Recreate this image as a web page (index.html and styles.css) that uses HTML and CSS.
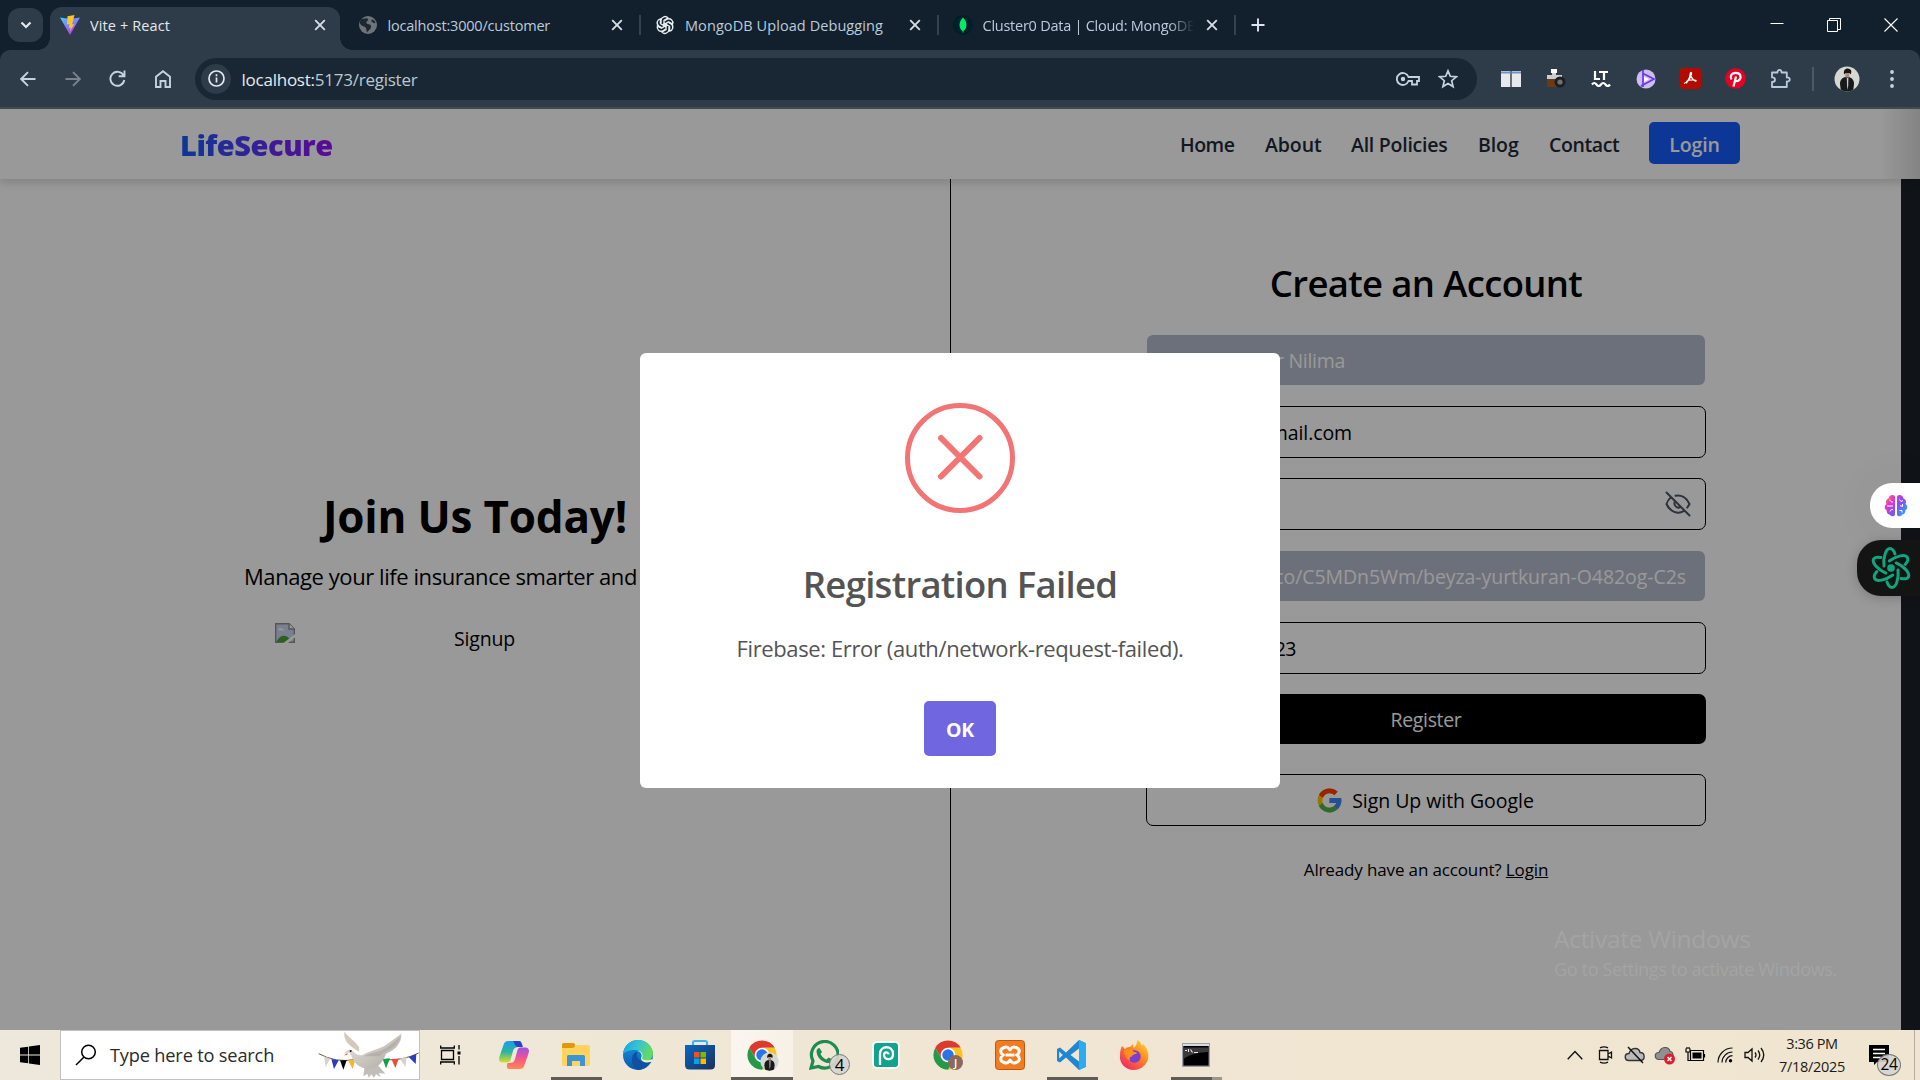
FILE: index.html
```
<!DOCTYPE html>
<html lang="en">
<head>
<meta charset="utf-8">
<title>Vite + React</title>
<link rel="stylesheet" href="styles.css">
</head>
<body>
<svg width="0" height="0" class="defs">
  <defs>
    <linearGradient id="gVite" x1="0" y1="0" x2=".6" y2="1"><stop offset="0" stop-color="#41d1ff"/><stop offset="1" stop-color="#bd34fe"/></linearGradient>
    <linearGradient id="gBrain" x1="0" y1="0" x2="1" y2=".8"><stop offset="0" stop-color="#ff9a3c"/><stop offset=".3" stop-color="#e835c8"/><stop offset=".6" stop-color="#8a4df0"/><stop offset="1" stop-color="#28a8ff"/></linearGradient>
    <linearGradient id="gStore" x1="0" y1="0" x2="1" y2="1"><stop offset="0" stop-color="#0669c4"/><stop offset="1" stop-color="#1d2f5c"/></linearGradient>
    <linearGradient id="gEdge" x1="0" y1="0" x2="1" y2=".3"><stop offset="0" stop-color="#1b9de0"/><stop offset=".5" stop-color="#33c3d8"/><stop offset="1" stop-color="#64dc5c"/></linearGradient>
    <linearGradient id="gEdge2" x1="0" y1="0" x2="0" y2="1"><stop offset="0" stop-color="#1699e0"/><stop offset="1" stop-color="#0a57b0"/></linearGradient>
    <linearGradient id="gCopA" x1="0" y1="0" x2="0" y2="1"><stop offset="0" stop-color="#1d9bf0"/><stop offset=".5" stop-color="#2bb5a0"/><stop offset="1" stop-color="#d9dc2c"/></linearGradient>
    <linearGradient id="gCopB" x1="0" y1="0" x2="0" y2="1"><stop offset="0" stop-color="#a04fe8"/><stop offset=".5" stop-color="#f0568c"/><stop offset="1" stop-color="#ff8a50"/></linearGradient>
    <linearGradient id="gFox" x1="1" y1="0" x2=".2" y2="1"><stop offset="0" stop-color="#ffe33c"/><stop offset=".45" stop-color="#ff8a1e"/><stop offset="1" stop-color="#f0246a"/></linearGradient>
    <linearGradient id="gWing" x1="0" y1="0" x2="1" y2="1"><stop offset="0" stop-color="#eceae6"/><stop offset="1" stop-color="#aca69f"/></linearGradient>
    <symbol id="chrome" viewBox="0 0 48 48"><circle cx="24" cy="24" r="12" fill="#fff"/><path fill="#dc3a2c" d="M24 13H43A22 22 0 0 0 5 13L14.5 29.5A11 11 0 0 1 24 13z"/><path fill="#fcc31e" d="M43 13H24A11 11 0 0 1 33.5 29.5L24 46A22 22 0 0 0 43 13z"/><path fill="#249a49" d="M5 13A22 22 0 0 0 24 46L33.5 29.5A11 11 0 0 1 14.5 29.5z"/><circle cx="24" cy="24" r="8.6" fill="#2a74e8"/></symbol>
    <symbol id="x" viewBox="0 0 12 12"><path d="M1.2 1.2l9.6 9.6M10.8 1.2L1.2 10.8" fill="none" stroke="currentColor" stroke-width="1.9"/></symbol>
    <symbol id="person" viewBox="0 0 26 26"><clipPath id="cp"><circle cx="13" cy="13" r="12.5"/></clipPath><g clip-path="url(#cp)"><path fill="#d5d8d3" d="M0 0h26v26H0z"/><path fill="#17191b" d="M7 26L6 18c0-4 2-6 5-7h4c3 1 5 3 5 7l-1 8z"/><path fill="#a88f7d" d="M11.300 6h4v5.500h-4z"/><path fill="#17130f" d="M10 8.500C9 2 14 2 15.500 3c2.500 1 2 3.500 1 5.500L15.500 7h-4z"/><path fill="#c9c9c6" d="M12.800 12h1.600l-.2 8-1 4z"/></g></symbol>
  </defs>
</svg>

<header class="tabs">
  <button class="tab-search"><svg width="12" height="8" viewBox="0 0 12 8"><path d="M1.500 1.500L6 6l4.500-4.500" fill="none" stroke="#e3e8ee" stroke-width="2.200"/></svg></button>
  <div class="tab active">
    <svg width="20" height="20" viewBox="0 0 20 20"><path d="M0 2.500L10 20 20 2.500 10 4z" fill="url(#gVite)"/><path d="M14.500 0L7.500 1.300 7 9.500l2.500-.5-.8 4 2-.5-1 4 4.800-7.500-2.500.5z" fill="#ffc524"/></svg>
    <span class="tab-label ls-a">Vite + React</span>
    <svg class="tab-close" width="12" height="12"><use href="#x"/></svg>
  </div>
  <div class="tab">
    <svg width="20" height="20" viewBox="0 0 20 20"><circle cx="10" cy="10" r="9" fill="#6f7479"/><path d="M4 3.500c2 1 5-1.500 6 .5s-2.500 2-1.500 4 4 .5 4.500 3-2 4-4 6.500c-1-2 0-3.500-1.500-5S3 11 2 8.500 3 5 4 3.500zM13.500 4.500c2 0 3.500 1.500 4 3.500-1.500.5-3-.5-4-1.500z" fill="#1b2933"/></svg>
    <span class="tab-label ls-b">localhost:3000/customer</span>
    <svg class="tab-close" width="12" height="12"><use href="#x"/></svg>
  </div>
  <div class="tab">
    <svg width="20" height="20" viewBox="0 0 20 20"><g fill="none" stroke="#e9edf0" stroke-width="1.400"><path id="pt" d="M6 8V5.200A4 4 0 0 1 13 3L9 5.300V12"/><use href="#pt" transform="rotate(60 10 10)"/><use href="#pt" transform="rotate(120 10 10)"/><use href="#pt" transform="rotate(180 10 10)"/><use href="#pt" transform="rotate(240 10 10)"/><use href="#pt" transform="rotate(300 10 10)"/></g></svg>
    <span class="tab-label ls-c">MongoDB Upload Debugging</span>
    <svg class="tab-close" width="12" height="12"><use href="#x"/></svg>
  </div>
  <div class="tab">
    <svg width="20" height="20" viewBox="0 0 20 20"><circle cx="10" cy="10" r="10" fill="#001e2b"/><path d="M10 2.500c5 5 4 11 .5 13.500v1.500h-1V16C6 13.500 5 7.500 10 2.500z" fill="#00ed64"/></svg>
    <span class="tab-label ls-d fade">Cluster0 Data | Cloud: MongoDB</span>
    <svg class="tab-close" width="12" height="12"><use href="#x"/></svg>
  </div>
  <button class="new-tab"><svg width="14" height="14" viewBox="0 0 14 14"><path d="M7 .5v13M.5 7h13" stroke="#dfe5ec" stroke-width="1.900"/></svg></button>
  <div class="win">
    <svg width="14" height="14" viewBox="0 0 14 14"><path d="M.5 5.500h13" stroke="#fff"/></svg>
    <svg width="14" height="14" viewBox="0 0 14 14"><path d="M.5 2.500h10v11H.5zM2.500 2.500V.5h11v11h-3" fill="none" stroke="#fff"/></svg>
    <svg width="14" height="14" viewBox="0 0 14 14"><path d="M.5.5l13 13M13.500.5l-13 13" stroke="#fff" stroke-width="1.100"/></svg>
  </div>
</header>

<div class="toolbar">
  <div class="nav-icons">
    <svg width="16" height="16" viewBox="0 0 16 16"><path d="M15.500 8H1.500M8 1.200L1.200 8 8 14.800" fill="none" stroke="#c5d3e1" stroke-width="1.900"/></svg>
    <svg width="16" height="16" viewBox="0 0 16 16"><path d="M.5 8h14M8 1.200L14.800 8 8 14.800" fill="none" stroke="#77848f" stroke-width="1.900"/></svg>
    <svg width="17" height="17" viewBox="0 0 17 17"><path d="M14.600 5.500A7 7 0 1 0 15.300 10M15.500.5v5.800H9.700" fill="none" stroke="#c5d3e1" stroke-width="1.900"/></svg>
    <svg width="16" height="18" viewBox="0 0 16 18"><path d="M1 17V6.800L8 1.200l7 5.600V17h-4.500v-6h-5v6z" fill="none" stroke="#c5d3e1" stroke-width="1.900"/></svg>
  </div>
  <div class="omnibox">
    <span class="site-info"><svg width="17" height="17" viewBox="0 0 17 17"><circle cx="8.500" cy="8.500" r="7.500" fill="none" stroke="#e3e8ee" stroke-width="1.700"/><path d="M8.500 7.500v5M8.500 4.300v1.900" stroke="#e3e8ee" stroke-width="1.700"/></svg></span>
    <span class="url"><b>localhost:</b>5173/register</span>
    <span class="omni-icon"><svg width="24" height="14" viewBox="0 0 24 14"><path d="M12.500 5A6 6 0 1 0 12.500 9H16v3.500h5V9h2V5z" fill="none" stroke="#c5d3e1" stroke-width="1.800"/><circle cx="7" cy="7" r="2.200" fill="#c5d3e1"/></svg></span>
    <span class="omni-icon"><svg width="20" height="20" viewBox="0 0 20 20"><path d="M10 1.800l2.300 5.500 6 .5-4.600 3.900 1.400 5.900L10 14.500l-5.100 3.100 1.400-5.900L1.700 7.800l6-.5z" fill="none" stroke="#c5d3e1" stroke-width="1.700"/></svg></span>
  </div>
  <div class="exts">
    <svg width="20" height="18" viewBox="0 0 20 18"><path fill="#e9e9ec" d="M0 1h9.300v16H0zM10.700 1H20v16h-9.300z"/><path fill="#6b94c7" d="M0 1.500h9.300v2H0zM10.700 1.500H20v2h-9.300z"/></svg>
    <svg width="20" height="20" viewBox="0 0 20 20"><path fill="#fff" d="M5 0h6v4H5z"/><path fill="#c9ccd2" d="M1 6h15v5H1zM6 4h4v3H6z"/><path fill="#6b3a14" d="M1 10h11v8H1z"/><circle cx="14" cy="13" r="5.500" fill="#1c1e22"/><circle cx="14" cy="13" r="2.600" fill="#6d7178"/></svg>
    <svg width="20" height="17" viewBox="0 0 20 17"><path d="M4 1v8h5M8 2h9M13 2v8M1 14.500q2.200-3 4.500 0t4.500 0 4.500 0 4.500 0" fill="none" stroke="#fff" stroke-width="2.200"/></svg>
    <svg width="20" height="20" viewBox="0 0 20 20"><circle cx="10" cy="10" r="9.500" fill="#cdbdf5"/><path d="M7 1v17M7 4.500l11 5.500-13 7" fill="none" stroke="#6d35e8" stroke-width="1.700"/><path d="M8 7.500l5 2.700-5 2.800z" fill="#fff"/></svg>
    <svg width="21" height="21" viewBox="0 0 21 21"><rect width="21" height="21" rx="3" fill="#b30b00"/><path d="M4 15.500c3-1 6-5 6.300-10 .2-1.600 1.600-1.200 1.200.5-.8 3-2.600 6-5.300 9.300M6 13.500c3-1.500 7-2 10.500-.8M10.800 8c1 2.500 3 4.500 5.500 5.500" fill="none" stroke="#fff" stroke-width="1.300"/></svg>
    <svg width="21" height="21" viewBox="0 0 21 21"><circle cx="10.500" cy="10.500" r="10.300" fill="#e60023"/><path d="M8.500 18.500l2.500-10M6.500 11.500C4.500 8.500 6.500 4.800 10.800 4.800c5 0 5.700 4.200 3.700 7-1.500 1.800-3.800 1.600-4.500 0" fill="none" stroke="#fff" stroke-width="2.200"/></svg>
    <svg width="21" height="21" viewBox="0 0 21 21"><path d="M2 4.500h5.500c-.5-3.500 4.500-3.500 4 0h5.300v5c4-.5 4 4.500 0 4v5.500H2v-5c4 0 4-4.600 0-4.600z" fill="none" stroke="#b9cadb" stroke-width="1.800" stroke-linejoin="round"/></svg>
  </div>
  <span class="tool-sep"></span>
  <svg class="avatar" width="26" height="26"><use href="#person"/></svg>
  <svg width="4" height="20" viewBox="0 0 4 20"><path d="M2 3h0M2 10h0M2 17h0" stroke="#c5d3e1" stroke-width="3.800" stroke-linecap="round"/></svg>
</div>

<main class="page">
  <nav class="site-nav">
    <span class="logo">LifeSecure</span>
    <div class="links"><a class="w1">Home</a><a class="w2">About</a><a class="w3">All Policies</a><a class="w4">Blog</a><a class="w5">Contact</a></div>
    <a class="login">Login</a>
  </nav>
  <div class="split">
    <section class="pitch">
      <h1>Join Us Today!</h1>
      <p>Manage your life insurance smarter and faster.</p>
      <div class="broken">
        <svg width="20" height="20" viewBox="0 0 20 20"><path d="M.7.7H14l5.300 5.300v13.300H.7z" fill="#c8d6f4" stroke="#8e8e8e" stroke-width="1.400"/><path d="M1.500 19c2-6 9-9 13-3l-4 3z" fill="#4fa12c"/><path d="M3 7c1-2.500 3-2.500 4-1 2-.5 2.500 1 2 1.500z" fill="#fff"/><path d="M14 .7V6h5.300" fill="#fff" stroke="#8e8e8e" stroke-width="1.400"/><path d="M8.500 20L20 11v3.500L13 20z" fill="#fff"/></svg>
        <span>Signup</span>
      </div>
    </section>
    <section class="signup">
      <h2>Create an Account</h2>
      <div class="fields">
        <div class="field filled"><span class="v1">Akter Nilima</span></div>
        <div class="field"><span class="v2">@gmail.com</span></div>
        <div class="field"><svg class="eye" width="26" height="26" viewBox="0 0 26 26"><g fill="none" stroke="#4a5565" stroke-width="2" stroke-linecap="round"><path d="M1.500 1.500l23 23M10.500 4.800C16 3.500 21.500 6.500 24.500 13c-.6 1.400-1.400 2.500-2.300 3.600M6 6.200C4 7.600 2.500 10 1.500 13c3.500 8 11.500 10.500 17 7.200M10 10.300c-2 3.800 2 7.800 5.600 5.600"/></g></svg></div>
        <div class="field filled"><span class="v4">co/C5MDn5Wm/beyza-yurtkuran-O482og-C2s</span></div>
        <div class="field"><span class="v5">123</span></div>
        <button class="register">Register</button>
      </div>
      <button class="google">
        <svg width="25" height="25" viewBox="3 3 42 42"><path fill="#FFC107" d="M43.600 20H24v8h11.300C33.700 32.700 29.200 36 24 36c-6.600 0-12-5.400-12-12s5.400-12 12-12c3 0 5.800 1.200 8 3l5.600-5.700C34 6 29.300 4 24 4 13 4 4 13 4 24s9 20 20 20 20-9 20-20c0-1.300-.1-2.700-.4-4z"/><path fill="#FF3D00" d="M6.300 14.700l6.600 4.800C14.700 15 19 12 24 12c3 0 5.800 1.200 8 3l5.600-5.700C34 6 29.300 4 24 4 16.300 4 9.700 8.300 6.300 14.700z"/><path fill="#4CAF50" d="M24 44c5.200 0 9.900-2 13.400-5.200l-6.200-5.200C29.200 35 26.700 36 24 36c-5.200 0-9.600-3.300-11.300-8l-6.500 5C9.500 39.600 16.200 44 24 44z"/><path fill="#4285F4" d="M43.600 20H24v8h11.300c-.8 2.200-2.200 4.200-4.100 5.600l6.200 5.200C37 39.200 44 34 44 24c0-1.300-.1-2.700-.4-4z"/></svg>
        <span>Sign Up with Google</span>
      </button>
      <p class="have">Already have an account? <u>Login</u></p>
    </section>
  </div>
  <div class="backdrop">
    <div class="modal">
      <svg width="110" height="110" viewBox="0 0 110 110"><circle cx="55" cy="55" r="52.500" fill="none" stroke="#f27474" stroke-width="5"/><path d="M36 35l38.500 38.500M74.500 35L36 73.500" stroke="#f27474" stroke-width="6" stroke-linecap="round"/></svg>
      <h2>Registration Failed</h2>
      <p>Firebase: Error (auth/network-request-failed).</p>
      <button>OK</button>
    </div>
  </div>
  <div class="watermark"><div class="wm1">Activate Windows</div><div class="wm2">Go to Settings to activate Windows.</div></div>
  <div class="side">
    <div class="brain"><svg width="24" height="24" viewBox="0 0 24 24"><path d="M11 2.500C9-.2 5 1 4.500 4.500 1.500 5.500 1.500 9 2.500 10-.2 12 .5 15.500 2.500 16c0 3 1.500 4.500 3.500 4.700 1 2 4 2.300 5 .3zM13 2.500C15-.2 19 1 19.500 4.500c3 1 3 4.500 2 5.500 2.700 2 2 5.500 0 6 0 3-1.500 4.500-3.500 4.700-1 2-4 2.300-5 .3z" fill="url(#gBrain)"/><path d="M3 12h6M6 5.500c0 2 1.500 2.500 3 2.500M6 17.500c0-1.500 1.500-2 3-2M15.500 5.500L17 7.500l2-1M16 11.500l2.500 1v-2.500M15.500 16.500h2.500v2" fill="none" stroke="#fff" stroke-width="1"/></svg></div>
    <div class="atom"><svg width="40" height="44" viewBox="0 0 40 44"><g fill="none" stroke="#0fa67f" stroke-width="3" stroke-linecap="round"><path id="orb" d="M13 20C12 11 15 2.500 19 2.500c2.500 0 4 2.500 5 5.500"/><use href="#orb" transform="rotate(60 20 22)"/><use href="#orb" transform="rotate(120 20 22)"/><use href="#orb" transform="rotate(180 20 22)"/><use href="#orb" transform="rotate(240 20 22)"/><use href="#orb" transform="rotate(300 20 22)"/></g><circle cx="20" cy="22" r="3.800" fill="#0fa67f"/></svg></div>
  </div>
</main>

<footer class="taskbar">
  <div class="start"><svg width="20" height="20" viewBox="0 0 20 20"><path d="M0 2.800L8.200 1.700v7.900H0zM9 1.600L20 0v9.600H9zM0 10.400h8.200v7.900L0 17.200zM9 10.400h11V20L9 18.400z"/></svg></div>
  <div class="search">
    <svg width="22" height="22" viewBox="0 0 22 22"><circle cx="13.500" cy="8" r="6.800" fill="none" stroke="#000" stroke-width="1.500"/><path d="M8.800 13.200L1 21" stroke="#000" stroke-width="1.500"/></svg>
    <span>Type here to search</span>
    <svg class="dove" width="102.700" height="48" viewBox="20 8 308 144">
      <path d="M28 76Q80 104 135 94M225 94Q280 98 328 74" fill="none" stroke="#6a5a4a" stroke-width="3"/>
      <path fill="#d8d2cc" d="M44 84l18 8-13 24z"/><path fill="#2a3cc0" d="M66 92l22 4-14 26z"/><path fill="#000" d="M92 96h20l-10 28z"/><path fill="#f7b52c" d="M116 96l22-2-8 28z"/><path fill="#12a04a" d="M220 92l22-2-12 30z"/><path fill="#f04a3c" d="M246 92l22-1-10 28z"/><path fill="#d8d2cc" d="M272 91l20-5-4 30z"/><path fill="#2a3cc0" d="M298 86l23-9-2 30z"/>
      <path d="M150 70C128 58 100 40 105 10c10 14 32 28 44 46z" fill="#d3cab9"/>
      <path d="M165 118l-3 26 12-8 4 12 8-10 8 10 6-10 14 8-6-12 20 2-26-30z" fill="#c2bdb8"/>
      <path d="M104 76c8-16 24-14 30-4 10 10 22 12 32 4 18-8 40-14 58-22l52-38c2 26-16 48-46 60-8 26-30 50-62 44-24-4-36-20-46-46l-8-1z" fill="url(#gWing)"/>
      <path d="M162 84c24-14 46-10 70-26l42-34c-6 32-42 42-64 60z" fill="#aaa39c" opacity=".55"/>
      <path d="M114 74l-10 7 10-1z" fill="#f0602c"/><circle cx="124" cy="68" r="3.200" fill="#111"/>
    </svg>
  </div>
  <div class="app view"><svg width="22" height="20" viewBox="0 0 22 20"><path d="M1.500 5.500h12v9h-12zM.7.500v2.500h13.600V.5M.7 19.500V17h13.600v2.500M19 0v4.500M19 11v8.500" fill="none" stroke="#000" stroke-width="1.300"/><path d="M17.500 6.500h3v3h-3z"/></svg></div>
  <div class="app"><svg width="30" height="28" viewBox="0 0 30 28"><path d="M4.500 4C5.500 1 6.500 0 9.500 0h10c3 0 3 3 2 6h-2c-3 0-4.500 1-5.500 4l-2.500 9c-.6 2-2 2.500-4 2.500H4c-4 0-4.500-3-3.500-6z" fill="url(#gCopA)"/><path d="M14 0h6c2.500 0 3 3 4 6h-5c-2.500 0-3-3-5-6z" fill="#2347c8"/><path d="M25.500 24c-1 3-2 4-5 4h-10c-3 0-3-3-2-6h2c3 0 4.500-1 5.500-4l2.500-9c.6-2 2-2.500 4-2.500H26c4 0 4.500 3 3.500 6z" fill="url(#gCopB)"/></svg></div>
  <div class="app"><svg width="28" height="24" viewBox="0 0 28 24"><path d="M0 2C0 1 .5 0 2 0h9c1.500 0 2 1 2.500 2H26c1.500 0 2 .8 2 2v17c0 1-.5 2-2 2H2c-1.500 0-2-1-2-2z" fill="#ffd35c"/><path d="M0 5V2C0 1 .5 0 2 0h9c1.500 0 2 1 2 2.500S12 5 10 5z" fill="#dd9a0c"/><path d="M5 23v-9c0-1.500.5-2 2-2h14c1.500 0 2 .5 2 2v9h-5v-5h-8v5z" fill="#3a94d8"/></svg><i class="line"></i></div>
  <div class="app"><svg width="30" height="30" viewBox="0 0 30 30"><circle cx="15" cy="15" r="15" fill="url(#gEdge2)"/><path d="M0 14C1 5 8 0 15 0c9 0 15 7 15 13.500 0 5-4 7.500-8 7.500-3 0-4.500-1.500-4-3 2-3-.5-7.500-5.500-8C6.500 9.500 1.500 12 0 14z" fill="url(#gEdge)"/><path d="M9 20c0-5 2-8 6-8.500-2 2-1.500 6 1 8 3.500 3 8 3 11.500 2C24 28 18 30.500 14 29.800 11 28 9 24 9 20z" fill="#1050a0"/><path d="M18 18c2-2.500 0-7-4.500-7 6-1 7 5 5.500 7 0 2.500 7 3 9.500 1l1.500 2c-4 2.500-12 2-12-3z" fill="#f0e9db"/></svg></div>
  <div class="app"><svg width="30" height="30" viewBox="0 0 30 30"><path d="M8 5V2.500C8 1 9 1 10 1h10c1 0 2 0 2 1.500V5" fill="none" stroke="#35b5f0" stroke-width="2"/><path d="M0 5h30v20c0 3-1.500 4.500-4.500 4.500h-21C1.500 29.500 0 28 0 25z" fill="url(#gStore)"/><path fill="#f25022" d="M9 12h5.500v5.500H9z"/><path fill="#7fba00" d="M15.500 12H21v5.500h-5.500z"/><path fill="#00a4ef" d="M9 18.500h5.500V24H9z"/><path fill="#ffb900" d="M15.500 18.500H21V24h-5.500z"/></svg></div>
  <div class="app current"><svg width="33" height="33" viewBox="0 0 33 33"><use href="#chrome" width="32" height="32"/><use href="#person" x="14" y="13" width="19" height="19"/></svg><i class="line wide"></i></div>
  <div class="app"><svg width="30" height="30" viewBox="0 0 30 30"><path d="M2 28l2-7A13.300 13.300 0 1 1 9.500 26.500z" fill="none" stroke="#1d8c50" stroke-width="3.200"/><path d="M10.500 8l2.500 4-1.500 2c1.500 3 3.500 4.500 6 5.500l2-2 4 2c-.5 3-3 4-5.500 3.500-6-1.500-10-6-10.500-11.500 0-2 1.500-3.500 3-3.500z" fill="#1d8c50"/></svg><b class="badge">4</b></div>
  <div class="app"><svg width="28" height="28" viewBox="0 0 28 28"><rect x="1" y="1" width="26" height="26" rx="4" fill="#12a38c" stroke="#f8f8f6" stroke-width="2"/><path d="M8 24V13c0-9 13-9 13 0 0 7-9 6.500-9 1 0-3.500 4.500-3.500 4.500-.5" fill="none" stroke="#fff" stroke-width="2.300"/></svg></div>
  <div class="app"><svg width="32" height="32" viewBox="0 0 32 32"><use href="#chrome" width="32" height="32"/><circle cx="23.500" cy="23.500" r="7.500" fill="#8a6a5d"/></svg><b class="letter">J</b></div>
  <div class="app"><svg width="30" height="30" viewBox="0 0 30 30"><rect x=".5" y=".5" width="29" height="29" rx="3" fill="#f47c20" stroke="#b85a14"/><path d="M9 7.500c5-2 5 2.500 6 2.500s1-4.500 6-2.500 3.500 5.500 1 7.500c2.500 2 4 5.500-1 7.500s-5-2.500-6-2.500-1 4.500-6 2.500-3.500-5.500-1-7.500c-2.500-2-4-5.500 1-7.500z" fill="none" stroke="#fff" stroke-width="3"/><path d="M10.500 15h9" stroke="#fff" stroke-width="3"/></svg></div>
  <div class="app"><svg width="30" height="30" viewBox="0 0 30 30"><path d="M22 0l7 3.200v23.600L22 30 9 17.500 3 22.500 0 21V9l3-1.500 6 5z" fill="#1f86d2"/><path d="M22 8.500L13.500 15l8.500 6.500z" fill="#f0e6d2"/><path d="M2.200 11.500L5.800 15l-3.600 3.500z" fill="#f0e6d2"/><path d="M22 0l7 3.200v23.600L22 30z" fill="#2eaaf2"/></svg><i class="line"></i></div>
  <div class="app"><svg width="30" height="30" viewBox="0 0 30 30"><path d="M3 6l3 3c2-2 4-2 5-2l3-3 .5 4C17 7 18 3 18.500 0c2.500 1.500 4 4 4.500 6l1-2c5 4 6 11 5 15-2 7-8 11-14 11C6 30 0 23 1 15c0-4 1-7 2-9z" fill="url(#gFox)"/><circle cx="15.500" cy="16.500" r="6.200" fill="#7a3fd0"/><path d="M5 10c5-2 8 0 10 2 2 0 3 .5 3 1.500-2 1-5 1-5 3-2 0-3 2-2 4-5-2-6-7-6-10.500z" fill="#ff9020"/></svg></div>
  <div class="app"><svg width="28" height="24" viewBox="0 0 28 24"><rect x=".7" y=".7" width="26.600" height="22.600" fill="#000" stroke="#9aa0a8" stroke-width="1.400"/><path d="M1 1h26v2H1z" fill="#d9dde3"/><path d="M1.500 4.500h25V9C18 9.500 8 11 1.500 16z" fill="#3a3a3a"/><path d="M3 7.500h2M6.500 6v3M8.500 6.500l2 3M12 9.500h4" stroke="#e8e8e8" stroke-width="1.100"/></svg><i class="line multi"></i></div>

  <div class="tray">
    <span><svg width="16" height="10" viewBox="0 0 16 10"><path d="M.7 9.300L8 1.500l7.300 7.800" fill="none" stroke="#111" stroke-width="1.400"/></svg></span>
    <span><svg width="16" height="18" viewBox="0 0 16 18"><path d="M2.500 4.500h8.500v9H2.500zM11 8l3.500-2v6L11 10M3 1.800q4-2 8 0M3 16.200q4 2 8 0" fill="none" stroke="#111" stroke-width="1.300"/></svg></span>
    <span><svg width="22" height="18" viewBox="0 0 22 18"><path d="M5 14.500c-5 0-5-7 0-7C7 1 15 1 16 6.500c5.500 0 5.500 8 0 8z" fill="#b9bab9" stroke="#333" stroke-width="1.400"/><path d="M4 1l15 16" stroke="#111" stroke-width="1.400"/></svg></span>
    <span><svg width="22" height="20" viewBox="0 0 22 20"><path d="M5 14.500c-5 0-5-7 0-7C7 1 15 1 16 6.500c4 0 4 8 0 8z" fill="#8f9090" stroke="#555" stroke-width="1.200"/><circle cx="15.500" cy="14" r="5.500" fill="#dc1f2e"/><path d="M13.500 12l4 4M17.500 12l-4 4" stroke="#fff" stroke-width="1.500"/></svg></span>
    <span><svg width="21" height="16" viewBox="0 0 21 16"><path d="M5.500 3.500h13v10h-13zM19.500 7v3.500M1 1.500v3.500h4V1.500M3 5v8.500h3M2 0v2M4 0v2" fill="none" stroke="#000" stroke-width="1.200"/><path d="M7.500 5.500h9v6h-9z"/></svg></span>
    <span><svg width="16" height="16" viewBox="0 0 16 16"><g fill="none" stroke="#111" stroke-width="1.200"><path d="M1 15.500A14.500 14.500 0 0 1 15.500 1M5 15.500A10.500 10.500 0 0 1 15.500 5M8.700 15.500a7 7 0 0 1 6.800-6.800"/></g><circle cx="13.500" cy="13.800" r="1.700"/></svg></span>
    <span><svg width="22" height="18" viewBox="0 0 22 18"><path d="M1 6.500h3L8 3v12l-4-3.500H1zM11 6.500q2 2.500 0 5M14 4.500q3.500 4.500 0 9M17 2q5.500 7 0 14" fill="none" stroke="#111" stroke-width="1.300"/></svg></span>
    <div class="clock"><div class="time">3:36 PM</div><div class="date">7/18/2025</div></div>
    <div class="notif"><svg width="20" height="20" viewBox="0 0 20 20"><path d="M0 0h20v17H8l-3 3v-3H0z"/><path d="M4 4.500h12M4 8.500h12M4 12.500h8" stroke="#fff" stroke-width="1.300"/></svg><b class="badge">24</b></div>
    <div class="peek"></div>
  </div>
</footer>
</body>
</html>
```
FILE: styles.css
```
* { box-sizing: border-box; }
body { margin: 0; width: 1920px; height: 1080px; overflow: hidden; display: flex; flex-direction: column; font-family: "Open Sans", sans-serif; background: #11202c; }
svg { display: block; flex: none; }
.defs { position: absolute; }
h1, h2, p { margin: 0; }
button { font-family: inherit; border: 0; padding: 0; }

/* Browser tabs */
.tabs { height: 50px; display: flex; align-items: flex-start; background: #11202c; color: #bccbdc; }
.tab-search { width: 35px; height: 34px; margin: 8px 7px 0 8px; border-radius: 12px; background: #2e3c49; display: flex; align-items: center; justify-content: center; }
.tab { position: relative; width: 297.5px; height: 50px; padding-left: 14px; display: flex; align-items: center; font-size: 14.5px; white-space: nowrap; }
.tab:not(.active)::after { content: ""; margin-left: 16px; width: 2px; height: 20px; background: #33424f; }
.tab-label { width: 218px; margin-left: 10px; overflow: hidden; line-height: 24px; padding-top: 1px; }
.tab-close { width: 12px; margin-left: 6px; color: #d5dde6; }
.tab.active { width: 290px; margin-right: 3.5px; margin-top: 7px; height: 43px; padding: 0 0 7px 10px; border-radius: 12px 12px 0 0; background: #2e3c49; color: #e3e8ee; }
.tab.active .tab-label { width: 214px; }
.tab.active .tab-close { margin-left: 10px; }
.tab.active::before, .tab.active::after { content: ""; position: absolute; bottom: 0; width: 12px; height: 12px; }
.tab.active::before { left: -12px; background: radial-gradient(circle at 0 0, transparent 11.5px, #2e3c49 12px); }
.tab.active::after { right: -12px; background: radial-gradient(circle at 100% 0, transparent 11.5px, #2e3c49 12px); }
.ls-a { letter-spacing: .12px; }
.ls-b { letter-spacing: -.2px; }
.ls-c { letter-spacing: .08px; }
.ls-d { letter-spacing: -.25px; }
.tab-label.fade { width: 218px; mask-image: linear-gradient(90deg, #000 186px, transparent 211px); }
.new-tab { width: 44px; height: 50px; background: none; display: flex; align-items: center; justify-content: center; }
.win { margin-left: auto; display: flex; gap: 43px; padding: 18px 22px 0 0; }

/* Toolbar */
.toolbar { height: 59px; display: flex; align-items: center; background: #2e3c49; border-radius: 10px 10px 0 0; border-bottom: 2px solid #46494f; }
.nav-icons { padding-left: 5px; display: grid; grid-template-columns: repeat(4, 45px); align-items: center; justify-items: center; }
.omnibox { width: 1282px; height: 42px; margin-left: 10px; padding: 0 9px 0 6px; border-radius: 21px; background: #182733; display: flex; align-items: center; }
.site-info { width: 30px; height: 30px; border-radius: 50%; background: #2e3c49; display: flex; align-items: center; justify-content: center; }
.url { flex: 1; padding: 1px 0 0 10.5px; font-size: 17px; letter-spacing: -.24px; color: #bdc7d0; }
.url b { font-weight: 400; color: #e6ebf0; }
.omni-icon { width: 40px; display: flex; justify-content: center; }
.exts { margin-left: 11px; display: grid; grid-template-columns: repeat(7, 45px); align-items: center; justify-items: center; }
.tool-sep { width: 2px; height: 24px; margin-left: 9px; background: #4a5967; }
.avatar { margin: 0 29.5px 0 20px; }

/* Page */
.page { position: relative; height: 921px; background: #1b2128; overflow: hidden; }
.site-nav { position: relative; z-index: 1; height: 70px; padding: 0 180px; display: flex; align-items: center; background: linear-gradient(90deg, transparent 1880px, rgba(0, 0, 0, .14)), #fff; box-shadow: 0 4px 8px rgba(0, 0, 0, .14); }
.logo { font-size: 29px; font-weight: 800; line-height: 40px; letter-spacing: -.48px; background: linear-gradient(90deg, #155dfc, #9810fa); background-clip: text; color: transparent; margin-top: 2px; }
.links { margin: 1px 0 0 auto; display: flex; gap: 30px; font-size: 19.5px; font-weight: 600; color: #1e2939; }
.w1 { width: 55px; letter-spacing: -.5px; }
.w2 { width: 56px; letter-spacing: -.1px; }
.w3 { width: 97px; letter-spacing: -.25px; }
.w4 { width: 41px; letter-spacing: -.1px; }
.w5 { width: 70px; letter-spacing: -.4px; white-space: nowrap; }
.login { width: 91px; height: 42px; margin: -2px 0 0 30px; border-radius: 5px; background: #155dfc; color: #fff; font-size: 19.5px; font-weight: 600; letter-spacing: -.1px; line-height: 45px; text-align: center; }
.split { display: grid; grid-template-columns: 951px 950px; width: 1901px; height: 851px; background: #fff; color: #000; }
.pitch { border-right: 1px solid #000; padding-top: 311.5px; display: flex; flex-direction: column; align-items: center; }
.pitch h1 { font-size: 44px; font-weight: 700; line-height: 50px; letter-spacing: -.2px; }
.pitch p { width: 461px; margin: 20px 0 32.5px; font-size: 22px; line-height: 30px; letter-spacing: -.43px; white-space: nowrap; text-indent: -.5px; }
.broken { width: 400px; height: 250px; display: flex; font-size: 19.5px; line-height: 30px; letter-spacing: -.15px; }
.broken span { margin-left: 159px; margin-top: 1px; }
.signup { padding-top: 79px; display: flex; flex-direction: column; align-items: center; }
.signup h2 { font-size: 36.5px; font-weight: 600; line-height: 50px; letter-spacing: -.65px; }
.fields { width: 560px; margin-top: 26px; display: grid; gap: 20px; }
.field { height: 52px; padding-left: 20px; border: 1px solid #000; border-radius: 7px; display: flex; align-items: center; font-size: 19.5px; line-height: 30px; }
.field.filled { border-color: transparent; background: #b4bbcb padding-box; color: #fff; }
.field span { padding-top: 2px; text-align: right; white-space: nowrap; }
.v1 { width: 178px; letter-spacing: -.3px; }
.v2 { width: 185px; letter-spacing: -.1px; }
.v4 { width: 519px; letter-spacing: -.07px; }
.v5 { width: 129px; letter-spacing: -.5px; }
.eye { margin-left: auto; margin-right: 14px; }
.register { height: 50px; border-radius: 7px; background: #000; color: #fff; font-size: 19.5px; line-height: 52px; letter-spacing: -.35px; }
.google { width: 560px; height: 52px; margin-top: 30px; padding-right: 1px; border: 1px solid #000; border-radius: 7px; background: none; color: #000; font-size: 19.5px; letter-spacing: -.05px; display: flex; align-items: center; justify-content: center; gap: 10px; }
.have { margin-top: 29px; font-size: 17px; line-height: 30px; letter-spacing: -.14px; }
.backdrop { position: absolute; inset: 0; z-index: 2; background: rgba(0, 0, 0, .4); display: flex; justify-content: center; align-items: flex-start; padding-top: 244px; }
.modal { width: 640px; height: 435px; padding-top: 50px; border-radius: 6px; background: #fff; color: #545454; display: flex; flex-direction: column; align-items: center; }
.modal h2 { margin-top: 46px; font-size: 36.5px; font-weight: 600; line-height: 50px; letter-spacing: -.72px; }
.modal p { margin-top: 24px; font-size: 22px; line-height: 30px; letter-spacing: -.38px; }
.modal button { width: 72px; height: 55px; margin-top: 38px; padding-top: 2px; border-radius: 5px; background: #7066e0; color: #fff; font-size: 19.5px; font-weight: 700; letter-spacing: -.3px; }
.watermark { position: absolute; z-index: 3; left: 1554px; top: 812px; color: #a4a4a4; white-space: nowrap; }
.wm1 { font-size: 24.5px; line-height: 36px; letter-spacing: -.28px; }
.wm2 { font-size: 18.2px; line-height: 24px; letter-spacing: -.43px; }
.side { position: absolute; z-index: 3; right: 0; top: 374px; display: flex; flex-direction: column; align-items: flex-end; gap: 12px; }
.brain { width: 50px; height: 45px; padding-left: 14px; border-radius: 22px 0 0 22px; background: #fff; display: flex; align-items: center; box-shadow: 0 0 50px rgba(0, 0, 0, .06); }
.atom { width: 63px; height: 56px; padding-left: 14px; border-radius: 24px 0 0 24px; background: #141414; display: flex; align-items: center; box-shadow: 0 2px 12px rgba(0, 0, 0, .2); }

/* Taskbar */
.taskbar { height: 50px; display: flex; background: linear-gradient(90deg, #eee8dc, #f0e6d3 50%, #f0e5d0); color: #000; }
.start { width: 60px; display: flex; align-items: center; justify-content: center; }
.search { width: 360px; border: 1px solid #c3c1be; background: #fff; display: flex; align-items: center; padding-left: 14px; }
.search span { margin-left: 13px; font-size: 18.2px; letter-spacing: -.17px; color: #2b2b2b; white-space: nowrap; }
.dove { margin-left: auto; }
.app { position: relative; width: 62px; display: flex; align-items: center; justify-content: center; }
.app.view { width: 60px; margin-right: 3px; padding-left: 1px; }
.current { background: linear-gradient(90deg, #faf6ef, #f7f1e6); }
.line { position: absolute; left: 6px; right: 5px; bottom: 0; height: 3px; background: #5f5c57; }
.line.wide { left: 0; right: 0; }
.line.multi { background: linear-gradient(90deg, #5f5c57 41px, #9c978e 41px); }
.badge { position: absolute; display: flex; align-items: center; justify-content: center; border: 1px solid #777; border-radius: 50%; background: rgba(215, 213, 208, .92); font-weight: 500; line-height: 1; }
.app .badge { width: 21px; height: 21px; left: 36px; top: 24px; font-size: 17px; }
.letter { position: absolute; left: 37px; top: 25px; font-size: 11px; line-height: 15px; font-weight: 600; color: #fff; }
.tray { margin-left: auto; display: flex; align-items: stretch; }
.tray > span { width: 30px; display: flex; align-items: center; justify-content: center; }
.clock { width: 84px; padding-top: 2px; font-size: 14.5px; line-height: 23px; text-align: center; color: #1a1a1a; }
.time { letter-spacing: -.38px; }
.date { letter-spacing: -.3px; }
.notif { position: relative; width: 60px; padding: 15px 0 0 15px; }
.notif .badge { left: 23px; top: 24px; width: 24px; height: 22px; font-size: 15.5px; letter-spacing: -.3px; }
.peek { width: 6px; border-left: 1px solid #b5aea0; }
```
